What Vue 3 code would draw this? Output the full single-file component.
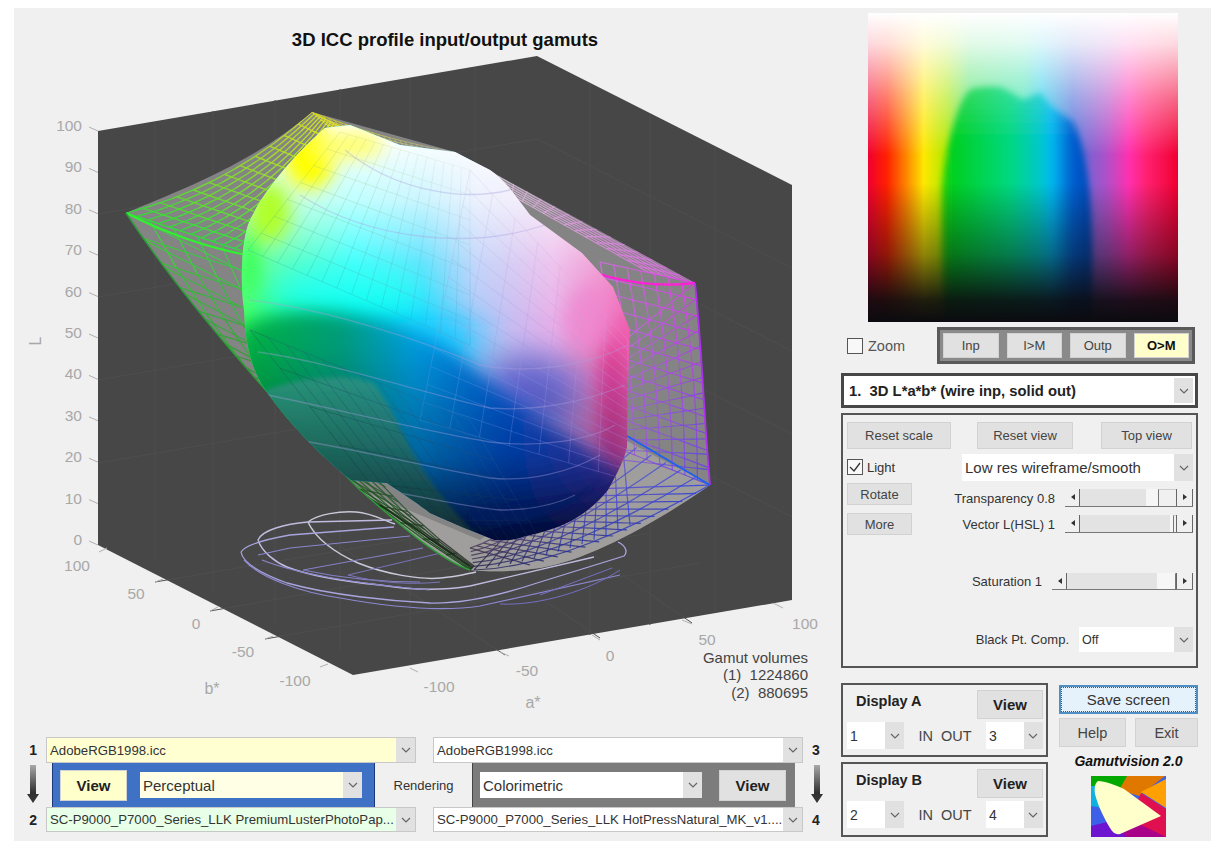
<script setup>
// 3D gamut plot: wireframe patches are built here, the solid is drawn in the template
const lerp = (a, b, t) => a + (b - a) * t;
const hex = (c) => [1, 3, 5].map((i) => parseInt(c.slice(i, i + 2), 16));
const mixHex = (a, b, t) => {
  const x = hex(a);
  const y = hex(b);
  return "#" + x.map((v, i) => Math.round(lerp(v, y[i], t)).toString(16).padStart(2, "0")).join("");
};

// corners: p[0] u0v0, p[1] u1v0, p[2] u0v1, p[3] u1v1. bend pushes the middle of each u run
const point = (s, u, v) => {
  const k = 4 * u * (1 - u);
  return [
    lerp(lerp(s.p[0][0], s.p[1][0], u), lerp(s.p[2][0], s.p[3][0], u), v) + s.bend[0] * k,
    lerp(lerp(s.p[0][1], s.p[1][1], u), lerp(s.p[2][1], s.p[3][1], u), v) + s.bend[1] * k,
  ];
};
const colour = (s, u, v) => mixHex(mixHex(s.c[0], s.c[1], u), mixHex(s.c[2], s.c[3], u), v);

const meshLines = (s) => {
  const out = [];
  const steps = 9;
  const run = (fixed, isU) => {
    for (let i = 0; i < steps; i++) {
      const a = i / steps;
      const b = (i + 1) / steps;
      const p = isU ? point(s, a, fixed) : point(s, fixed, a);
      const q = isU ? point(s, b, fixed) : point(s, fixed, b);
      const c = isU ? colour(s, a, fixed) : colour(s, fixed, a);
      out.push({
        d: `M${p[0].toFixed(1)},${p[1].toFixed(1)}L${q[0].toFixed(1)},${q[1].toFixed(1)}`,
        c,
        w: s.w,
        o: s.o,
      });
    }
  };
  if (s.nv > 0) for (let i = 0; i <= s.nv; i++) run(i / s.nv, true);
  if (s.nu > 0) for (let i = 0; i <= s.nu; i++) run(i / s.nu, false);
  return out;
};

const back = [
  // green to yellow sheet
  { p: [[126, 213], [312, 112], [245, 252], [342, 128]], bend: [6, 12], c: ["#38d838", "#d8dc20", "#30e040", "#e8e820"], nu: 12, nv: 11, w: 1.4, o: 0.95 },
  // green down to black
  { p: [[126, 213], [470, 570], [245, 252], [474, 566]], bend: [-22, 22], c: ["#38d838", "#103010", "#40c850", "#282028"], nu: 18, nv: 5, w: 1.3, o: 0.9 },
  { p: [[126, 213], [380, 505], [300, 300], [470, 566]], bend: [-22, 22], c: ["#38d838", "#103010", "#40c850", "#202020"], nu: 16, nv: 0, w: 1.2, o: 0.85 },
  // yellow to white strip
  { p: [[312, 112], [455, 152], [330, 128], [452, 160]], bend: [0, 4], c: ["#d8d820", "#a8a8a8", "#e8e840", "#d8d8d8"], nu: 26, nv: 4, w: 1, o: 0.8 },
  // white to magenta
  { p: [[458, 152], [695, 283], [470, 172], [648, 272]], bend: [0, 0], c: ["#d8d0d8", "#d860e0", "#d8d0d8", "#e070e0"], nu: 17, nv: 6, w: 1.2, o: 0.85 },
  // magenta to blue
  { p: [[695, 283], [710, 485], [600, 262], [622, 450]], bend: [4, 0], c: ["#e040e8", "#6040e8", "#d070e0", "#a060d0"], nu: 12, nv: 7, w: 1.2, o: 0.9 },
  { p: [[695, 283], [712, 470], [625, 340], [622, 460]], bend: [2, 0], c: ["#d040e0", "#5040e8", "#c070e0", "#9060d0"], nu: 12, nv: 0, w: 1.1, o: 0.85 },
  // blue to black, both skews so the lines cross
  { p: [[710, 485], [530, 565], [560, 490], [470, 548]], bend: [0, 8], c: ["#3040e0", "#302c60", "#8060c0", "#483848"], nu: 13, nv: 0, w: 1.2, o: 0.9 },
  { p: [[630, 525], [474, 570], [622, 440], [520, 520]], bend: [0, 6], c: ["#3048e0", "#282848", "#8060c0", "#684860"], nu: 13, nv: 0, w: 1.2, o: 0.9 },
  { p: [[710, 485], [474, 570], [622, 440], [470, 548]], bend: [-14, 20], c: ["#3040e0", "#282848", "#6060d0", "#483848"], nu: 0, nv: 6, w: 1.2, o: 0.85 },
];

const front = [
  { p: [[248, 250], [340, 132], [470, 345], [470, 170]], bend: [0, 0], c: ["#30b0a0", "#d0d070", "#30a8d0", "#d8e8f0"], nu: 7, nv: 15, w: 1, o: 0.3 },
  { p: [[470, 170], [628, 340], [420, 420], [628, 480]], bend: [0, 0], c: ["#d8c8e0", "#e090d8", "#3090e0", "#a070e0"], nu: 7, nv: 14, w: 1, o: 0.35 },
  { p: [[250, 330], [470, 420], [430, 560], [540, 540]], bend: [0, 0], c: ["#206860", "#206cb0", "#101820", "#102050"], nu: 12, nv: 6, w: 1, o: 0.45 },
];

const backLines = back.flatMap(meshLines);
const frontLines = front.flatMap(meshLines);

const lTicks = [100, 90, 80, 70, 60, 50, 40, 30, 20, 10, 0].map((t, i) => ({ t, y: 131 + i * 41.4 }));
const bTicks = [
  { t: 100, x: 77, y: 571, a: [107, 548], z: [99, 552] },
  { t: 50, x: 136, y: 599, a: [163, 579], z: [155, 582] },
  { t: 0, x: 196, y: 629, a: [218, 607], z: [210, 611] },
  { t: -50, x: 243, y: 657, a: [273, 636], z: [265, 639] },
  { t: -100, x: 295, y: 686, a: [328, 664], z: [320, 667] },
];
const aTicks = [
  { t: -100, x: 439, y: 692, a: [410, 668], z: [418, 672] },
  { t: -50, x: 527, y: 676, a: [500, 652], z: [509, 656] },
  { t: 0, x: 610, y: 661, a: [592, 635], z: [600, 640] },
  { t: 50, x: 707, y: 645, a: [682, 620], z: [692, 624] },
  { t: 100, x: 805, y: 629, a: [773, 603], z: [783, 608] },
];

const wallLines = [
  "M155,122L155,560", "M213,111L213,590", "M275,100L275,622", "M340,89L340,650",
  "M410,78L410,655", "M475,67L475,630", "M590,83L590,635", "M650,115L650,625", "M715,148L715,612",
  "M98,214L537,139L792,268", "M98,297L537,222L792,351", "M98,380L537,305L792,434", "M98,463L537,388L792,517",
  "M155,582L592,508", "M210,611L650,533", "M265,639L700,563",
  "M300,520L505,655", "M400,504L600,638", "M500,490L692,623",
];

const contours = [
  { d: "M308,522C318,514 340,511 356,512C372,513 385,521 395,524M308,522C315,538 335,553 358,563C385,574 420,580 441,578C456,577 466,574 476,572", c: "#c8c8d8", w: 1.5 },
  { d: "M258,540C262,530 285,524 308,522L392,520M258,540C262,552 275,562 287,567C310,576 340,581 380,585C410,590 440,591 470,586L594,557", c: "#c0bce0", w: 1.4 },
  { d: "M241,552C245,545 262,540 290,535L394,527M241,552C243,565 268,576 287,583C330,595 390,601 430,603C470,604 510,592 537,583L624,556C628,552 626,546 618,542", c: "#a8a4dc", w: 1.3 },
  { d: "M244,560C260,578 300,592 340,598C390,607 440,612 480,606L620,575", c: "#8c88d0", w: 1.2 },
  { d: "M258,555L290,548L410,536M262,560C300,575 360,584 430,590", c: "#8a86cc", w: 1.1 },
  { d: "M303,570L423,548M303,570C340,578 380,582 420,582", c: "#8480c4", w: 1.1 },
  { d: "M348,575L445,552M348,575C380,583 410,585 440,582", c: "#7874b8", w: 1 },
  { d: "M500,604C540,606 590,590 620,570M540,595L612,568", c: "#7470c0", w: 1 },
];

const levels = [
  "M258,352C330,362 420,392 490,408C540,412 590,400 625,385",
  "M268,395C340,410 430,432 490,442C540,448 590,440 615,425",
  "M298,440C360,450 430,468 490,478C530,482 570,472 600,455",
  "M340,485C400,490 450,505 500,510C530,510 555,505 575,495",
  "M250,300C330,310 420,340 480,365C530,375 590,365 628,345",
  "M345,150C400,195 470,200 510,190",
  "M300,195C370,240 470,250 545,225",
];

const sliders = [
  { label: "Transparency 0.8", width: 128, fill: 66, thumb: 18 },
  { label: "Vector L(HSL) 1", width: 128, fill: 90, thumb: 3 },
];
const saturation = { label: "Saturation 1", width: 141, fill: 90, thumb: 0 };
const gamutBlob = "M942,190C945,150 958,100 970,90C980,86 995,86 1003,88L1023,100L1040,93L1053,108L1073,122C1085,145 1092,190 1092,250L1092,340L945,340C942,290 942,230 942,190Z";
</script>

<template>
  <div class="window">
    <div class="plot-col">
      <svg class="plot" viewBox="14 8 816 729" width="816" height="729">
        <defs>
          <clipPath id="wireClip">
            <path d="M126,213C180,190 250,165 312,112L455,152L695,283L710,485C660,520 590,560 540,568C510,572 490,572 470,570C440,560 400,525 360,490C290,420 190,310 126,213Z" />
          </clipPath>
          <clipPath id="solidClip">
            <path d="M325,128C300,150 262,190 248,225C240,250 241,290 244,310C245,340 250,365 262,385C285,420 320,455 351,480L387,483C405,495 420,505 430,513L462,527L494,540C505,541 515,540 523,537C545,532 560,527 573,520C590,510 600,500 608,490C618,472 624,460 627,447L628,380L630,330L613,287L582,253L530,215C515,195 505,180 490,170L455,152L400,145L350,125Z" />
          </clipPath>
          <filter id="soft" x="-30%" y="-30%" width="160%" height="160%"><feGaussianBlur stdDeviation="18" /></filter>
          <filter id="softer" x="-30%" y="-30%" width="160%" height="160%"><feGaussianBlur stdDeviation="9" /></filter>
          <filter id="edge" x="-10%" y="-10%" width="120%" height="120%"><feGaussianBlur stdDeviation="2" /></filter>
          <linearGradient id="solidBase" gradientUnits="userSpaceOnUse" x1="245" y1="0" x2="630" y2="0">
            <stop offset="0" stop-color="#40ff60" />
            <stop offset="0.14" stop-color="#20ffa8" />
            <stop offset="0.28" stop-color="#00ffff" />
            <stop offset="0.46" stop-color="#30d8ff" />
            <stop offset="0.6" stop-color="#b0c8f8" />
            <stop offset="0.8" stop-color="#e8b0e8" />
            <stop offset="1" stop-color="#f060b0" />
          </linearGradient>
          <linearGradient id="solidWhite" gradientUnits="userSpaceOnUse" x1="0" y1="135" x2="0" y2="320">
            <stop offset="0" stop-color="#fff" stop-opacity="1" />
            <stop offset="0.35" stop-color="#fff" stop-opacity="0.75" />
            <stop offset="0.7" stop-color="#fff" stop-opacity="0.25" />
            <stop offset="1" stop-color="#fff" stop-opacity="0" />
          </linearGradient>
          <linearGradient id="shade" gradientUnits="userSpaceOnUse" x1="245" y1="0" x2="625" y2="0">
            <stop offset="0" stop-color="#00b040" />
            <stop offset="0.25" stop-color="#009c78" />
            <stop offset="0.45" stop-color="#009ce0" />
            <stop offset="0.7" stop-color="#0058d8" />
            <stop offset="1" stop-color="#5040c0" />
          </linearGradient>
          <linearGradient id="dark" gradientUnits="userSpaceOnUse" x1="0" y1="340" x2="0" y2="535">
            <stop offset="0" stop-color="#000020" stop-opacity="0" />
            <stop offset="0.6" stop-color="#000030" stop-opacity="0.35" />
            <stop offset="1" stop-color="#000020" stop-opacity="0.88" />
          </linearGradient>
          <linearGradient id="lobe" gradientUnits="userSpaceOnUse" x1="0" y1="385" x2="0" y2="535">
            <stop offset="0" stop-color="#2f8f7e" stop-opacity="0.8" />
            <stop offset="1" stop-color="#12302f" stop-opacity="0.85" />
          </linearGradient>
        </defs>

        <polygon class="box" points="98,131 537,56 792,185 792,600 353,675 98,545" />
        <path v-for="(d, i) in wallLines" :key="'w' + i" class="wall" :d="d" />

        <path v-for="(c, i) in contours" :key="'c' + i" :d="c.d" fill="none" :stroke="c.c" :stroke-width="c.w" />

        <!-- grey inside of the wire gamut -->
        <path class="wire-fill" d="M126,213C180,190 250,165 312,112L455,152L695,283L710,485C660,520 590,560 540,568C510,572 490,572 470,570C440,560 400,525 360,490C290,420 190,310 126,213Z" />
        <path class="wire-pale" d="M710,485C660,520 590,560 540,568C510,572 490,572 470,570C440,560 400,525 360,490L480,540L625,440Z" />
        <g clip-path="url(#wireClip)">
          <path v-for="(l, i) in backLines" :key="'b' + i" :d="l.d" :stroke="l.c" :stroke-width="l.w" :stroke-opacity="l.o" fill="none" />
        </g>
        <path d="M126,213C180,240 220,250 247,255" stroke="#30f030" stroke-width="2.2" fill="none" />
        <path d="M126,213C190,310 290,420 360,490C400,525 440,560 470,570" stroke="#2c9c38" stroke-width="1.5" fill="none" />
        <path d="M545,253C590,275 640,290 695,283" stroke="#ff20d8" stroke-width="2.4" fill="none" />
        <path d="M695,283C702,350 704,420 710,485" stroke="#b030f0" stroke-width="1.8" fill="none" />
        <path d="M600,420L710,485" stroke="#2060f0" stroke-width="2" fill="none" />

        <!-- solid output gamut -->
        <g clip-path="url(#solidClip)">
          <rect x="230" y="110" width="410" height="450" fill="url(#solidBase)" />
          <g filter="url(#soft)">
            <ellipse cx="345" cy="292" rx="80" ry="26" fill="#00fff0" />
            <ellipse cx="430" cy="345" rx="55" ry="26" fill="#10c8ff" />
            <ellipse cx="530" cy="395" rx="50" ry="40" fill="#6a70e0" />
          </g>
          <rect x="230" y="110" width="410" height="450" fill="url(#solidWhite)" />
          <g filter="url(#softer)">
            <ellipse cx="310" cy="155" rx="26" ry="34" fill="#ffff00" />
            <ellipse cx="350" cy="145" rx="34" ry="14" fill="#ffff70" />
            <ellipse cx="270" cy="212" rx="20" ry="30" fill="#b0ff28" />
            <ellipse cx="250" cy="262" rx="9" ry="34" fill="#30ff50" />
            <ellipse cx="612" cy="395" rx="12" ry="78" fill="#e8409c" />
            <ellipse cx="590" cy="320" rx="22" ry="34" fill="#f088d0" fill-opacity="0.8" />
          </g>
          <g filter="url(#softer)">
            <path d="M236,332C270,306 340,306 400,325C470,350 500,400 550,425C590,445 610,470 640,480L640,560L236,560Z" fill="url(#shade)" />
            <rect x="230" y="340" width="410" height="220" fill="url(#dark)" />
          </g>
          <g filter="url(#edge)">
            <path d="M262,392C300,376 350,372 374,384C395,410 405,445 430,480C445,502 460,518 480,540L400,540L300,440Z" fill="url(#lobe)" />
            <path d="M470,522C520,530 575,510 600,480C580,500 540,505 470,508Z" fill="#001c60" fill-opacity="0.7" />
          </g>
        </g>
        <path v-for="(l, i) in frontLines" :key="'f' + i" :d="l.d" :stroke="l.c" :stroke-width="l.w" :stroke-opacity="l.o" fill="none" clip-path="url(#solidClip)" />
        <path v-for="(d, i) in levels" :key="'l' + i" :d="d" fill="none" stroke="#a8a0e0" stroke-opacity="0.38" stroke-width="1.3" clip-path="url(#solidClip)" />

        <text class="title" x="445" y="46" text-anchor="middle">3D ICC profile input/output gamuts</text>

        <g v-for="t in lTicks" :key="'lt' + t.t">
          <line class="tick" x1="89" :y1="t.y - 4" x2="98" :y2="t.y" />
          <text class="axis" x="82" :y="t.y" text-anchor="end">{{ t.t }}</text>
        </g>
        <g v-for="t in bTicks" :key="'bt' + t.t">
          <line class="tick" :x1="t.a[0]" :y1="t.a[1]" :x2="t.z[0]" :y2="t.z[1]" />
          <text class="axis" :x="t.x" :y="t.y" text-anchor="middle">{{ t.t }}</text>
        </g>
        <g v-for="t in aTicks" :key="'at' + t.t">
          <line class="tick" :x1="t.a[0]" :y1="t.a[1]" :x2="t.z[0]" :y2="t.z[1]" />
          <text class="axis" :x="t.x" :y="t.y" text-anchor="middle">{{ t.t }}</text>
        </g>
        <text class="axis axis-name" x="41" y="341" text-anchor="middle" transform="rotate(-90 41 341)">L</text>
        <text class="axis axis-name" x="212" y="694" text-anchor="middle">b*</text>
        <text class="axis axis-name" x="533" y="708" text-anchor="middle">a*</text>

        <text class="volumes" x="808" y="663" text-anchor="end">Gamut volumes</text>
        <text class="volumes" x="808" y="680" text-anchor="end">(1)&#160;&#160;1224860</text>
        <text class="volumes" x="808" y="698" text-anchor="end">(2)&#160;&#160;880695</text>
      </svg>

      <div class="sel-row sel-row-top">
        <span class="num">1</span>
        <div class="combo combo-file yellow"><span class="combo-text">AdobeRGB1998.icc</span><span class="chev"><svg width="10" height="6" viewBox="0 0 10 6"><path d="M1,1L5,5L9,1" /></svg></span></div>
        <div class="combo combo-file second"><span class="combo-text">AdobeRGB1998.icc</span><span class="chev"><svg width="10" height="6" viewBox="0 0 10 6"><path d="M1,1L5,5L9,1" /></svg></span></div>
        <span class="num num-right">3</span>
      </div>
      <div class="sel-row sel-row-mid">
        <div class="arrow-cell">
          <svg width="14" height="40" viewBox="0 0 14 40"><defs><linearGradient id="shaft" x1="0" y1="0" x2="0" y2="1"><stop offset="0" stop-color="#a8a8a8" /><stop offset="1" stop-color="#222" /></linearGradient></defs><rect x="4" y="0" width="6" height="31" fill="url(#shaft)" /><path d="M1,29L13,29L7,38Z" fill="#333" /></svg>
        </div>
        <div class="render-box blue">
          <div class="btn view-btn active">View</div>
          <div class="combo render-combo pale"><span class="combo-text">Perceptual</span><span class="chev"><svg width="10" height="6" viewBox="0 0 10 6"><path d="M1,1L5,5L9,1" /></svg></span></div>
        </div>
        <div class="rendering">Rendering</div>
        <div class="render-box grey">
          <div class="combo render-combo"><span class="combo-text">Colorimetric</span><span class="chev"><svg width="10" height="6" viewBox="0 0 10 6"><path d="M1,1L5,5L9,1" /></svg></span></div>
          <div class="btn view-btn">View</div>
        </div>
        <div class="arrow-cell arrow-right">
          <svg width="14" height="40" viewBox="0 0 14 40"><rect x="4" y="0" width="6" height="31" fill="url(#shaft)" /><path d="M1,29L13,29L7,38Z" fill="#333" /></svg>
        </div>
      </div>
      <div class="sel-row sel-row-bot">
        <span class="num">2</span>
        <div class="combo combo-file green"><span class="combo-text">SC-P9000_P7000_Series_LLK PremiumLusterPhotoPap...</span><span class="chev"><svg width="10" height="6" viewBox="0 0 10 6"><path d="M1,1L5,5L9,1" /></svg></span></div>
        <div class="combo combo-file second"><span class="combo-text">SC-P9000_P7000_Series_LLK HotPressNatural_MK_v1....</span><span class="chev"><svg width="10" height="6" viewBox="0 0 10 6"><path d="M1,1L5,5L9,1" /></svg></span></div>
        <span class="num num-right">4</span>
      </div>
    </div>

    <div class="side">
      <svg class="colormap" viewBox="868 13 310 309" width="310" height="309">
        <defs>
          <linearGradient id="hueOuter" gradientUnits="userSpaceOnUse" x1="868" y1="0" x2="1178" y2="0">
            <stop offset="0" stop-color="#f00030" />
            <stop offset="0.06" stop-color="#ff2000" />
            <stop offset="0.12" stop-color="#ff8000" />
            <stop offset="0.18" stop-color="#ffe800" />
            <stop offset="0.25" stop-color="#b0e800" />
            <stop offset="0.33" stop-color="#40e060" />
            <stop offset="0.5" stop-color="#30e0a8" />
            <stop offset="0.56" stop-color="#20c8e8" />
            <stop offset="0.66" stop-color="#5070d8" />
            <stop offset="0.77" stop-color="#b050c8" />
            <stop offset="0.84" stop-color="#ff30b0" />
            <stop offset="0.9" stop-color="#ff2070" />
            <stop offset="1" stop-color="#f00030" />
          </linearGradient>
          <linearGradient id="hueInner" gradientUnits="userSpaceOnUse" x1="940" y1="0" x2="1095" y2="0">
            <stop offset="0" stop-color="#30d000" />
            <stop offset="0.08" stop-color="#00d020" />
            <stop offset="0.45" stop-color="#00d880" />
            <stop offset="0.64" stop-color="#00c8c8" />
            <stop offset="0.72" stop-color="#00b8f0" />
            <stop offset="0.85" stop-color="#0060d0" />
            <stop offset="1" stop-color="#0040b0" />
          </linearGradient>
          <linearGradient id="topWhite" x1="0" y1="0" x2="0" y2="1">
            <stop offset="0" stop-color="#fff" stop-opacity="1" />
            <stop offset="0.1" stop-color="#fff" stop-opacity="0.85" />
            <stop offset="0.27" stop-color="#fff" stop-opacity="0.42" />
            <stop offset="0.46" stop-color="#fff" stop-opacity="0" />
          </linearGradient>
          <linearGradient id="botBlack" x1="0" y1="0" x2="0" y2="1">
            <stop offset="0.55" stop-color="#0b0b0f" stop-opacity="0" />
            <stop offset="0.78" stop-color="#0b0b0f" stop-opacity="0.45" />
            <stop offset="0.93" stop-color="#0b0b0f" stop-opacity="0.92" />
            <stop offset="1" stop-color="#0b0b0f" stop-opacity="1" />
          </linearGradient>
          <linearGradient id="blobFade" gradientUnits="userSpaceOnUse" x1="0" y1="85" x2="0" y2="140">
            <stop offset="0" stop-color="#fff" stop-opacity="0.22" />
            <stop offset="1" stop-color="#fff" stop-opacity="0" />
          </linearGradient>
          <clipPath id="mapClip"><rect x="868" y="13" width="310" height="309" /></clipPath>
          <filter id="mapBlur" x="-5%" y="-5%" width="110%" height="110%"><feGaussianBlur stdDeviation="3" /></filter>
        </defs>
        <g clip-path="url(#mapClip)">
          <rect x="868" y="13" width="310" height="309" fill="url(#hueOuter)" />
          <rect x="868" y="13" width="310" height="309" fill="url(#topWhite)" />
          <g filter="url(#mapBlur)">
            <path :d="gamutBlob" fill="url(#hueInner)" />
            <path :d="gamutBlob" fill="url(#blobFade)" />
          </g>
          <rect x="868" y="13" width="310" height="309" fill="url(#botBlack)" />
        </g>
      </svg>

      <div class="zoom-row">
        <label class="check check-zoom"><span class="box-tick"></span>Zoom</label>
        <div class="view-bar">
          <div class="btn bar-btn">Inp</div>
          <div class="btn bar-btn">I&gt;M</div>
          <div class="btn bar-btn">Outp</div>
          <div class="btn bar-btn on">O&gt;M</div>
        </div>
      </div>

      <div class="mode-combo">
        <span class="combo-text">1.&nbsp; 3D L*a*b* (wire inp, solid out)</span>
        <span class="chev"><svg width="10" height="6" viewBox="0 0 10 6"><path d="M1,1L5,5L9,1" /></svg></span>
      </div>

      <div class="panel">
        <div class="panel-top">
          <div class="btn reset-scale">Reset scale</div>
          <div class="btn reset-view">Reset view</div>
          <div class="btn top-view">Top view</div>
        </div>
        <div class="controls">
          <div class="ctrl-left">
            <label class="check check-light">
              <span class="box-tick"><svg width="14" height="14" viewBox="0 0 14 14"><path d="M2,7L6,11L12,3" fill="none" stroke="#333" stroke-width="1.3" /></svg></span>Light
            </label>
            <div class="btn side-btn">Rotate</div>
            <div class="btn side-btn">More</div>
          </div>
          <div class="ctrl-right">
            <div class="combo render-mode"><span class="combo-text">Low res wireframe/smooth</span><span class="chev"><svg width="10" height="6" viewBox="0 0 10 6"><path d="M1,1L5,5L9,1" /></svg></span></div>
            <div v-for="s in sliders" :key="s.label" class="ctrl-row slider-row">
              <span class="ctrl-label">{{ s.label }}</span>
              <div class="slider" :style="{ width: s.width + 'px' }">
                <span class="step step-left"></span>
                <span class="track">
                  <span class="fill" :style="{ width: s.fill + 'px' }"></span>
                  <span class="thumb" :style="{ width: s.thumb + 'px' }"></span>
                </span>
                <span class="step step-right"></span>
              </div>
            </div>
            <div class="ctrl-row saturation">
              <span class="ctrl-label">{{ saturation.label }}</span>
              <div class="slider" :style="{ width: saturation.width + 'px' }">
                <span class="step step-left"></span>
                <span class="track">
                  <span class="fill" :style="{ width: saturation.fill + 'px' }"></span>
                  <span class="thumb" :style="{ width: saturation.thumb + 'px' }"></span>
                </span>
                <span class="step step-right"></span>
              </div>
            </div>
            <div class="ctrl-row black-pt">
              <span class="ctrl-label">Black Pt. Comp.</span>
              <div class="combo bpc"><span class="combo-text">Off</span><span class="chev"><svg width="10" height="6" viewBox="0 0 10 6"><path d="M1,1L5,5L9,1" /></svg></span></div>
            </div>
          </div>
        </div>
      </div>

      <div class="bottom">
        <div class="displays">
          <div class="display">
            <div class="display-head"><b>Display A</b><div class="btn disp-view">View</div></div>
            <div class="display-row">
              <div class="combo mini"><span class="combo-text">1</span><span class="chev"><svg width="10" height="6" viewBox="0 0 10 6"><path d="M1,1L5,5L9,1" /></svg></span></div>
              <span class="in-out">IN&nbsp; OUT</span>
              <div class="combo mini"><span class="combo-text">3</span><span class="chev"><svg width="10" height="6" viewBox="0 0 10 6"><path d="M1,1L5,5L9,1" /></svg></span></div>
            </div>
          </div>
          <div class="display display-b">
            <div class="display-head"><b>Display B</b><div class="btn disp-view">View</div></div>
            <div class="display-row">
              <div class="combo mini"><span class="combo-text">2</span><span class="chev"><svg width="10" height="6" viewBox="0 0 10 6"><path d="M1,1L5,5L9,1" /></svg></span></div>
              <span class="in-out">IN&nbsp; OUT</span>
              <div class="combo mini"><span class="combo-text">4</span><span class="chev"><svg width="10" height="6" viewBox="0 0 10 6"><path d="M1,1L5,5L9,1" /></svg></span></div>
            </div>
          </div>
        </div>
        <div class="actions">
          <div class="save">Save screen</div>
          <div class="help-row">
            <div class="btn help">Help</div>
            <div class="btn exit">Exit</div>
          </div>
          <div class="brand">Gamutvision 2.0</div>
          <svg class="logo" viewBox="0 0 75 61" width="75" height="61">
            <rect width="75" height="61" fill="#3c60e8" />
            <polygon points="0,0 36,0 32,15 0,12" fill="#00a800" />
            <polygon points="36,0 74,0 48,20 28,14" fill="#e07800" />
            <polygon points="75,3 75,32 50,16" fill="#ffa000" />
            <polygon points="50,17 75,33 75,61 62,61 40,40" fill="#e01050" />
            <polygon points="30,58 48,48 75,61 30,61" fill="#a80088" />
            <polygon points="0,50 20,45 35,61 0,61" fill="#6c14d0" />
            <polygon points="0,10 8,10 12,32 0,30" fill="#10b0e0" />
            <path d="M7,5C14,5 24,9 33,13L70,40L29,58C25,59 22,57 19,52C13,42 7,30 4,18C3,12 4,7 7,5Z" fill="#ffffcc" />
          </svg>
        </div>
      </div>
    </div>
  </div>
</template>

<style scoped>
.window {
  position: relative;
  display: flex;
  width: 1197px;
  height: 833px;
  margin: 8px 0 0 14px;
  background: #f0f0f0;
  font-family: "Liberation Sans", Arial, sans-serif;
  font-size: 14px;
  color: #333;
}

.plot-col {
  width: 816px;
}

.plot {
  display: block;
}

.box {
  fill: #474747;
}

.wall {
  fill: none;
  stroke: #4e4e4e;
  stroke-width: 1;
}

.wire-fill {
  fill: #848484;
}

.wire-pale {
  fill: #a09e9c;
}

.title {
  font-size: 18.5px;
  font-weight: bold;
  fill: #111;
}

.axis {
  font-size: 15.5px;
  fill: #a8a8a8;
}

.axis-name {
  font-size: 16px;
}

.tick {
  stroke: #b0b0b0;
  stroke-width: 1;
}

.volumes {
  font-size: 15px;
  fill: #444;
}

.sel-row {
  display: flex;
  align-items: center;
}

.sel-row-top {
  height: 26px;
}

.sel-row-mid {
  height: 44px;
}

.sel-row-bot {
  height: 25px;
}

.num {
  width: 32px;
  padding-right: 9px;
  box-sizing: border-box;
  text-align: right;
  font-weight: bold;
  color: #222;
}

.num-right {
  width: 26px;
  padding: 0 0 0 9px;
  text-align: left;
}

.combo {
  display: flex;
  align-items: stretch;
  box-sizing: border-box;
  background: #fff;
  border: 1px solid #c8c8c8;
  overflow: hidden;
}

.combo-text {
  flex: 1;
  padding-left: 3px;
  white-space: nowrap;
  overflow: hidden;
  display: flex;
  align-items: center;
}

.chev {
  width: 19px;
  flex: none;
  display: flex;
  align-items: center;
  justify-content: center;
  background: #e1e1e1;
}

.chev path {
  fill: none;
  stroke: #666;
  stroke-width: 1.2;
}

.combo-file {
  width: 370px;
  height: 100%;
  font-size: 13.2px;
}

.combo-file.second {
  margin-left: 17px;
}

.yellow {
  background: #ffffd2;
}

.green {
  background: #e8ffe8;
}

.pale {
  background: #ffffe6;
}

.arrow-cell {
  width: 38px;
  padding-left: 12px;
  box-sizing: border-box;
  display: flex;
}

.arrow-right {
  width: 35px;
  padding-left: 15px;
}

.render-box {
  width: 323px;
  height: 44px;
  box-sizing: border-box;
  display: flex;
  align-items: center;
}

.blue {
  background: #3f72c4;
  border-left: 1px solid #1c3a78;
  border-right: 1px solid #1c3a78;
  padding: 0 12px 0 7px;
  justify-content: space-between;
}

.grey {
  background: #7c7c7c;
  border-left: 1px solid #444;
  padding: 0 9px 0 7px;
  justify-content: space-between;
}

.render-combo {
  width: 222px;
  height: 26px;
  font-size: 15px;
  border: none;
}

.rendering {
  width: 97px;
  text-align: center;
  font-size: 13px;
}

.btn {
  display: flex;
  align-items: center;
  justify-content: center;
  box-sizing: border-box;
  background: #e1e1e1;
  border: 1px solid #d2d2d2;
  color: #444;
}

.view-btn {
  width: 67px;
  height: 31px;
  font-weight: bold;
  font-size: 15px;
  color: #222;
}

.view-btn.active {
  background: #ffffcc;
}

.side {
  width: 357px;
  margin-left: 11px;
}

.colormap {
  display: block;
  margin: 5px 0 0 27px;
}

.zoom-row {
  display: flex;
  align-items: center;
  justify-content: space-between;
  height: 37px;
  margin-top: 5px;
  padding-right: 3px;
}

.check {
  display: flex;
  align-items: center;
}

.check-zoom {
  margin-left: 6px;
  font-size: 14.5px;
  gap: 5px;
  color: #555;
}

.box-tick {
  width: 16px;
  height: 16px;
  box-sizing: border-box;
  border: 1px solid #555;
  background: #f8f8f8;
  display: flex;
}

.view-bar {
  display: flex;
  gap: 8px;
  width: 258px;
  height: 37px;
  box-sizing: border-box;
  border: 3px solid #5a5a5a;
  background: #8a8a8a;
  padding: 3px;
}

.bar-btn {
  flex: 1;
  font-size: 13px;
}

.bar-btn.on {
  background: #ffffcc;
  font-weight: bold;
  color: #111;
}

.mode-combo {
  display: flex;
  align-items: stretch;
  height: 35px;
  box-sizing: border-box;
  margin-top: 9px;
  border: 3px solid #474747;
  padding: 2px;
  background: #fff;
  font-weight: bold;
  font-size: 14.8px;
  color: #222;
}

.panel {
  height: 255px;
  box-sizing: border-box;
  margin-top: 5px;
  border: 2px solid #555;
  padding: 7px 3px 0 4px;
}

.panel-top {
  display: flex;
  height: 27px;
}

.panel-top .btn {
  font-size: 13px;
}

.reset-scale {
  width: 104px;
}

.reset-view {
  width: 96px;
  margin-left: 26px;
}

.top-view {
  width: 91px;
  margin-left: 28px;
}

.controls {
  display: flex;
  margin-top: 5px;
}

.ctrl-left {
  width: 65px;
  flex: none;
}

.check-light {
  margin-top: 5px;
  height: 16px;
  gap: 4px;
  font-size: 13px;
}

.side-btn {
  height: 22px;
  margin-top: 8px;
  font-size: 13px;
}

.ctrl-right {
  flex: 1;
  margin-left: 42px;
}

.render-mode {
  margin-left: 8px;
  height: 27px;
  border: none;
  font-size: 15px;
}

.ctrl-row {
  display: flex;
  align-items: center;
  justify-content: flex-end;
}

.slider-row {
  height: 18px;
  margin-top: 8px;
}

.saturation {
  height: 17px;
  margin-top: 40px;
}

.black-pt {
  height: 25px;
  margin-top: 37px;
}

.ctrl-label {
  margin-right: 10px;
  font-size: 13px;
  white-space: nowrap;
}

.slider {
  display: flex;
  height: 100%;
  box-sizing: border-box;
  border-bottom: 1px solid #777;
}

.step {
  position: relative;
  width: 14px;
  flex: none;
  box-sizing: content-box;
}

.step-left {
  border-right: 1px solid #666;
}

.step-right {
  width: 15px;
  border-left: 1px solid #666;
  border-right: 1px solid #666;
}

.step::after {
  content: "";
  position: absolute;
  top: 5px;
  left: 5px;
  border: 3px solid transparent;
}

.step-left::after {
  left: 3px;
  border-right: 4px solid #333;
}

.step-right::after {
  left: 6px;
  border-left: 4px solid #333;
}

.track {
  flex: 1;
  display: flex;
  justify-content: space-between;
  background: #f6f6f6;
}

.fill {
  background: #e3e3e3;
}

.thumb {
  box-sizing: border-box;
  background: #f0f0f0;
  border-left: 1px solid #777;
  border-top: 1px solid #ccc;
}

.bpc {
  width: 114px;
  height: 100%;
  border: none;
  font-size: 12.5px;
}

.bottom {
  display: flex;
  margin-top: 15px;
}

.displays {
  width: 207px;
}

.display {
  height: 74px;
  box-sizing: border-box;
  border: 2px solid #555;
  padding: 5px 3px 0 4px;
}

.display-b {
  height: 75px;
  margin-top: 5px;
}

.display-head {
  display: flex;
  justify-content: space-between;
  align-items: flex-start;
  height: 29px;
  padding-left: 9px;
  font-size: 14.5px;
  color: #222;
}

.display-head b {
  margin-top: 3px;
}

.disp-view {
  width: 66px;
  height: 29px;
  font-weight: bold;
  font-size: 15px;
  color: #222;
}

.display-row {
  display: flex;
  justify-content: space-between;
  align-items: center;
  height: 27px;
  margin-top: 3px;
  font-size: 14.5px;
}

.mini {
  width: 57px;
  height: 27px;
  border: none;
  font-size: 14px;
}

.in-out {
  color: #444;
}

.actions {
  width: 139px;
  margin-left: 11px;
  text-align: center;
}

.save {
  display: flex;
  align-items: center;
  justify-content: center;
  height: 29px;
  margin-top: 2px;
  box-sizing: border-box;
  border: 2px solid #4f8fc4;
  outline: 1px dotted #555;
  outline-offset: -3px;
  background: #e5f1fb;
  font-size: 15px;
}

.help-row {
  display: flex;
  justify-content: space-between;
  margin-top: 4px;
}

.help-row .btn {
  height: 29px;
  font-size: 14.5px;
}

.help {
  width: 67px;
}

.exit {
  width: 63px;
}

.brand {
  margin-top: 6px;
  font-weight: bold;
  font-style: italic;
  font-size: 14px;
  color: #111;
}

.logo {
  display: block;
  margin: 7px 0 0 32px;
}
</style>

<style>
html,
body {
  margin: 0;
  background: #fff;
}
</style>
